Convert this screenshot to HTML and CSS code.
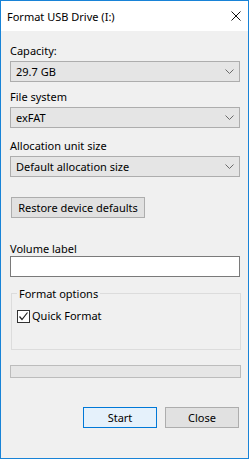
FILE: index.html
```html
<!DOCTYPE html>
<html lang="en">
<head>
    <meta charset="UTF-8">
    <title>Format USB Drive (I:)</title>
    <link rel="stylesheet" href="styles.css">
</head>
<body>
    <div class="window">
        <div class="titlebar">
            <span class="title">Format USB Drive (I:)</span>
            <svg class="close" width="10" height="10" viewBox="0 0 10 10">
                <path d="M0.5 0.5L9.5 9.5M9.5 0.5L0.5 9.5" stroke="#111" stroke-width="1"/>
            </svg>
        </div>

        <div class="content">
            <div class="label label-capacity">Capacity:</div>
            <div class="combo">
                <span>29.7 GB</span>
                <svg class="chevron" width="9" height="5" viewBox="0 0 9 5"><path d="M0.5 0.5L4.5 4.5L8.5 0.5" fill="none" stroke="#6a6a6a"/></svg>
            </div>

            <div class="label label-fs">File system</div>
            <div class="combo">
                <span>exFAT</span>
                <svg class="chevron" width="9" height="5" viewBox="0 0 9 5"><path d="M0.5 0.5L4.5 4.5L8.5 0.5" fill="none" stroke="#6a6a6a"/></svg>
            </div>

            <div class="label label-alloc">Allocation unit size</div>
            <div class="combo">
                <span>Default allocation size</span>
                <svg class="chevron" width="9" height="5" viewBox="0 0 9 5"><path d="M0.5 0.5L4.5 4.5L8.5 0.5" fill="none" stroke="#6a6a6a"/></svg>
            </div>

            <button class="btn btn-restore">Restore device defaults</button>

            <div class="label label-volume">Volume label</div>
            <div class="textbox"></div>

            <fieldset class="group">
                <legend>Format options</legend>
                <div class="check">
                    <span class="checkbox">
                        <svg width="11" height="11" viewBox="0 0 11 11"><path d="M1.5 5.5L4 8.5L9.5 1.5" fill="none" stroke="#222" stroke-width="1.2"/></svg>
                    </span>
                    <span>Quick Format</span>
                </div>
            </fieldset>

            <div class="progress"></div>

            <div class="actions">
                <button class="btn btn-default">Start</button>
                <button class="btn">Close</button>
            </div>
        </div>
    </div>
</body>
</html>
```

FILE: styles.css
```css
/* Reset */
html, body {
    margin: 0;
    padding: 0;
    background-color: #fff;
}

body {
    font-family: "Segoe UI", "Noto Sans", sans-serif;
    font-size: 11px;
    line-height: 15px;
    color: #000;
}

/* Dialog frame */
.window {
    box-sizing: border-box;
    width: 249px;
    height: 459px;
    border: 1px solid #1883d7;
    background-color: #f0f0f0;
}

/* Title bar */
.titlebar {
    box-sizing: border-box;
    height: 30px;
    background-color: #fff;
    display: flex;
    align-items: center;
    justify-content: space-between;
    padding: 1px 7px 0 6px;
}

.close {
    display: block;
    margin-top: -1px;
}

/* Dialog content */
.content {
    padding: 11px 8px 0 9px;
}

.label {
    padding-top: 1px;
}

.label-fs {
    margin-top: 6px;
}

.label-alloc {
    margin-top: 9px;
}

.label-volume {
    margin-top: 22px;
}

/* Drop-down lists */
.combo {
    box-sizing: border-box;
    width: 230px;
    height: 21px;
    margin-top: 3px;
    padding: 0 5px 0 5px;
    border: 1px solid #adadad;
    background-color: #e5e5e5;
    display: flex;
    align-items: center;
    justify-content: space-between;
}

.chevron {
    display: block;
}

/* Push buttons */
.btn {
    box-sizing: border-box;
    height: 21px;
    margin: 0;
    padding: 0;
    border: 1px solid #adadad;
    background-color: #e1e1e1;
    font-family: inherit;
    font-size: inherit;
    line-height: 15px;
    color: #000;
}

.btn-restore {
    display: block;
    width: 134px;
    margin: 20px 0 0 1px;
}

.btn-default {
    border-color: #0078d7;
    background-color: #e5f1fb;
}

/* Volume label input */
.textbox {
    box-sizing: border-box;
    width: 230px;
    height: 21px;
    margin-top: 0;
    border: 1px solid #7a7a7a;
    background-color: #fff;
}

/* Format options group */
.group {
    box-sizing: border-box;
    width: 230px;
    height: 64px;
    margin: 9px 0 0 1px;
    padding: 0 5px;
    border: 1px solid #dcdcdc;
}

.group legend {
    padding: 0 2px;
}

.check {
    display: flex;
    align-items: flex-start;
    gap: 2px;
    margin-top: 7px;
}

.checkbox {
    box-sizing: border-box;
    width: 13px;
    height: 13px;
    margin-top: 2px;
    border: 1px solid #333;
    background-color: #fff;
    display: flex;
    align-items: center;
    justify-content: center;
}

.checkbox svg {
    display: block;
}

/* Progress bar */
.progress {
    box-sizing: border-box;
    width: 231px;
    height: 13px;
    margin-top: 15px;
    border: 1px solid #bcbcbc;
    background-color: #e6e6e6;
}

/* Start / Close */
.actions {
    display: flex;
    justify-content: flex-end;
    gap: 8px;
    width: 229px;
    margin-top: 29px;
}

.actions .btn {
    width: 74px;
}
```
